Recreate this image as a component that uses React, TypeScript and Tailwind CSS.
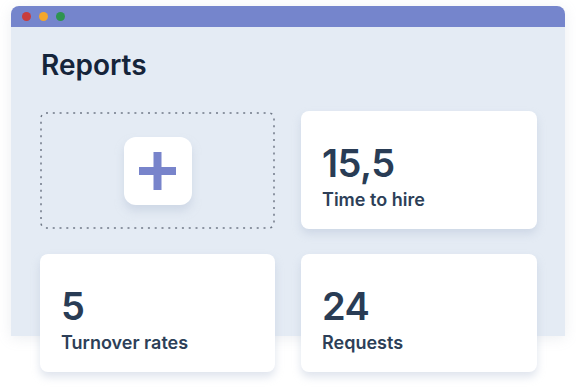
const stats = [
  { value: '15,5', label: 'Time to hire' },
  { value: '5', label: 'Turnover rates' },
  { value: '24', label: 'Requests' },
]

const StatCard = ({ value, label }: { value: string; label: string }) => (
  <div className="flex h-[118px] flex-col rounded-[8px] bg-white px-[21px] pt-[33px] shadow-[0_5px_8px_rgba(176,188,210,0.4)]">
    <span className="text-[38px] font-semibold leading-none tracking-[-0.5px] text-[#293c55]">{value}</span>
    <span className="mt-[9px] text-[18px] font-semibold leading-none text-[#2d3f58]">{label}</span>
  </div>
)

const AddTile = () => (
  <div className="relative flex h-[117px] items-center justify-center">
    <svg className="absolute inset-0 h-full w-full" preserveAspectRatio="none">
      <rect
        x="1"
        y="1"
        width="calc(100% - 2px)"
        height="calc(100% - 2px)"
        rx="5"
        fill="none"
        stroke="#6f7886"
        strokeWidth="1.5"
        strokeDasharray="2 4.8"
      />
    </svg>
    <button className="relative flex h-[68px] w-[68px] items-center justify-center rounded-[12px] bg-white shadow-[0_6px_8px_rgba(190,200,218,0.55)]">
      <svg width="37" height="38" viewBox="0 0 37 38">
        <rect x="14.5" y="0" width="8" height="38" fill="#7884cb" />
        <rect x="0" y="15" width="37" height="8" fill="#7884cb" />
      </svg>
    </button>
  </div>
)

export default function App() {
  return (
    <div className="h-[388px] w-[576px] overflow-hidden bg-white pl-[11px] pt-[6px] font-['Inter','Liberation_Sans',sans-serif]">
      <div className="w-[554px] rounded-t-[8px] shadow-[0_2px_14px_rgba(150,160,180,0.18)]">
        <div className="flex h-[21px] items-center gap-[8px] rounded-t-[8px] bg-[#7585cc] pl-[11px]">
          <span className="h-[9px] w-[9px] rounded-full bg-[#c83c3c]" />
          <span className="h-[9px] w-[9px] rounded-full bg-[#f4a72a]" />
          <span className="h-[9px] w-[9px] rounded-full bg-[#2e9450]" />
        </div>
        <div className="h-[309px] bg-[#e4ebf4] pl-[29px] pr-[28px] pt-[21px]">
          <h1 className="pl-[1px] text-[28px] font-semibold leading-[34px] text-[#15243a]">Reports</h1>
          <div className="mt-[29px] grid grid-cols-[235px_236px] gap-x-[26px] gap-y-[25px]">
            <div className="pt-[1px]">
              <AddTile />
            </div>
            {stats.map((s) => (
              <StatCard key={s.label} value={s.value} label={s.label} />
            ))}
          </div>
        </div>
      </div>
    </div>
  )
}
